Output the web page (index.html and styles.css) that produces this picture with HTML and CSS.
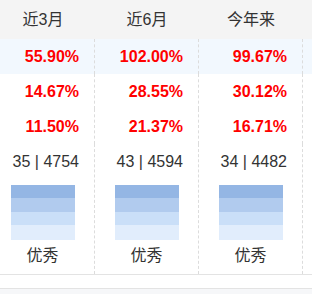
FILE: index.html
```html
<!DOCTYPE html>
<html lang="zh">
<head>
<meta charset="utf-8">
<link rel="stylesheet" href="styles.css">
</head>
<body>
<div class="wrap">
  <div class="table">
    <div class="row head">
      <div class="cell">近3月</div>
      <div class="cell">近6月</div>
      <div class="cell">今年来</div>
      <div class="cell"></div>
    </div>
    <div class="row hl">
      <div class="cell num">55.90%</div>
      <div class="cell num">102.00%</div>
      <div class="cell num">99.67%</div>
      <div class="cell num"></div>
    </div>
    <div class="row">
      <div class="cell num">14.67%</div>
      <div class="cell num">28.55%</div>
      <div class="cell num">30.12%</div>
      <div class="cell num"></div>
    </div>
    <div class="row">
      <div class="cell num">11.50%</div>
      <div class="cell num">21.37%</div>
      <div class="cell num">16.71%</div>
      <div class="cell num"></div>
    </div>
    <div class="row last">
      <div class="cell rank">
        <div class="count">35 | 4754</div>
        <div class="bar"><span></span><span></span><span></span><span></span></div>
        <div class="label">优秀</div>
      </div>
      <div class="cell rank">
        <div class="count">43 | 4594</div>
        <div class="bar"><span></span><span></span><span></span><span></span></div>
        <div class="label">优秀</div>
      </div>
      <div class="cell rank">
        <div class="count">34 | 4482</div>
        <div class="bar"><span></span><span></span><span></span><span></span></div>
        <div class="label">优秀</div>
      </div>
      <div class="cell rank"></div>
    </div>
  </div>
  <div class="gap"></div>
  <div class="foot"></div>
</div>
</body>
</html>
```
FILE: styles.css
```css
html, body {
  margin: 0;
  padding: 0;
  background: #fff;
}
body {
  font-family: "Liberation Sans", Arial, "Noto Sans CJK SC", sans-serif;
  font-size: 16px;
  color: #333;
}
.wrap {
  width: 312px;
  height: 294px;
  overflow: hidden;
}
.table {
  border-bottom: 1px solid #e3e3e3;
  overflow: hidden;
}
.row {
  display: flex;
  margin-left: -9px;
  width: 420px;
  height: 35px;
}
.row.head {
  height: 39px;
  background: #f4f4f4;
}
.row.hl {
  background: #f2f8fe;
}
.cell {
  flex: 0 0 104px;
  box-sizing: border-box;
  border-right: 1px dashed #dcdcdc;
}
.head .cell {
  border-right: none;
  text-align: center;
  line-height: 39px;
}
.num {
  text-align: right;
  padding-right: 15px;
  line-height: 35px;
  font-weight: bold;
  color: #ff0000;
}
.row.last {
  height: 130px;
}
.rank {
  display: flex;
  flex-direction: column;
  align-items: center;
}
.count {
  align-self: stretch;
  text-align: right;
  padding-right: 15px;
  line-height: 36px;
  height: 36px;
}
.bar {
  margin-top: 5px;
  width: 64px;
  height: 55px;
  display: flex;
  flex-direction: column;
}
.bar span {
  flex: 1;
}
.bar span:nth-child(1) { background: #94b6e4; flex: 0 0 13px; }
.bar span:nth-child(2) { background: #b1cbee; flex: 0 0 14px; }
.bar span:nth-child(3) { background: #cadff8; flex: 0 0 13px; }
.bar span:nth-child(4) { background: #e1edfc; flex: 1; }
.label {
  line-height: 31px;
  height: 34px;
}
.gap {
  height: 13px;
  border-bottom: 1px solid #e3e3e3;
}
.foot {
  height: 20px;
  background: #f6f7f9;
}
```
